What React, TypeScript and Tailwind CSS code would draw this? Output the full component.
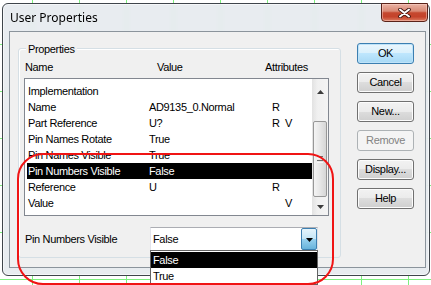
import React from 'react';

type Row = { name: string; value?: string; a1?: string; a2?: string; sel?: boolean };

const rows: Row[] = [
  { name: 'Implementation' },
  { name: 'Name', value: 'AD9135_0.Normal', a1: 'R' },
  { name: 'Part Reference', value: 'U?', a1: 'R', a2: 'V' },
  { name: 'Pin Names Rotate', value: 'True' },
  { name: 'Pin Names Visible', value: 'True' },
  { name: 'Pin Numbers Visible', value: 'False', sel: true },
  { name: 'Reference', value: 'U', a1: 'R' },
  { name: 'Value', a2: 'V' },
];

const gridX = [32, 79, 126, 173, 220, 267, 314, 361, 408];
const gridY = [44, 91, 138, 185, 232, 279];

function Tri({ up = false, color = '#3c3c3c' }: { up?: boolean; color?: string }) {
  return (
    <svg width="7" height="4" viewBox="0 0 7 4">
      <path d={up ? 'M0 4 L3.5 0 L7 4 Z' : 'M0 0 L7 0 L3.5 4 Z'} fill={color} />
    </svg>
  );
}

function Btn({ label, kind = 'normal' }: { label: string; kind?: 'normal' | 'default' | 'disabled' }) {
  const cls =
    kind === 'default'
      ? 'border-[#3c7fb1] bg-[linear-gradient(to_bottom,#eaf6fd_0%,#d9f0fc_50%,#bee6fd_50%,#a7d9f5_100%)] shadow-[inset_0_0_0_1px_#bfe3f9]'
      : kind === 'disabled'
      ? 'border-[#adb2b5] bg-[#f4f4f4] text-[#838383]'
      : 'border-[#707070] bg-[linear-gradient(to_bottom,#f2f2f2_0%,#ebebeb_50%,#dddddd_50%,#cfcfcf_100%)] shadow-[inset_0_0_0_1px_#fcfcfc]';
  return (
    <div className={`w-[57px] h-[21px] rounded-[3px] border flex items-center justify-center ${cls}`}>
      {label}
    </div>
  );
}

export default function App() {
  return (
    <div className="relative w-[431px] h-[285px] overflow-hidden bg-white font-['Liberation_Sans',Arial,sans-serif] text-[11px] leading-[13px] tracking-[-0.35px] text-black">
      <svg className="absolute inset-0" width="431" height="285">
        {gridX.map((x) => (
          <line key={'x' + x} x1={x + 0.5} y1={0} x2={x + 0.5} y2={285} stroke="#7ef07e" />
        ))}
        {gridY.map((y) => (
          <line key={'y' + y} x1={0} y1={y + 0.5} x2={431} y2={y + 0.5} stroke="#7ef07e" />
        ))}
      </svg>

      {/* dialog window */}
      <div className="absolute left-[2px] top-[3px] w-[428px] h-[273px] rounded-[6px] border border-[#3f454b] bg-[rgba(228,233,238,0.86)] backdrop-blur-[3px] shadow-[inset_0_0_0_1px_rgba(255,255,255,0.6)] flex flex-col">
        <div className="h-[27px] flex items-center pl-[7px] font-['Noto_Sans',sans-serif] text-[12px] tracking-normal text-black">
          User Properties
        </div>

        {/* close button */}
        <div className="absolute right-[1px] top-[-1px] w-[47px] h-[19px] rounded-b-[4px] border border-[#5a2219] bg-[linear-gradient(to_bottom,#eab3a4_0%,#d98a76_42%,#c5482f_52%,#c4432b_75%,#dc7c60_100%)] shadow-[inset_0_0_0_1px_rgba(255,220,210,0.45)] flex items-center justify-center">
          <svg width="13" height="10" viewBox="0 0 13 10">
            <path d="M2 1.5 L11 8.5 M11 1.5 L2 8.5" stroke="#3b130d" strokeWidth="3.6" strokeLinecap="round" />
            <path d="M2 1.5 L11 8.5 M11 1.5 L2 8.5" stroke="#ffffff" strokeWidth="2" strokeLinecap="round" />
          </svg>
        </div>

        {/* client area */}
        <div className="relative ml-[6px] w-[417px] h-[237px] border border-[#8b949c] bg-[#f0f0f0] flex items-start">
          {/* group box */}
          <div className="relative ml-[8px] mt-[16px] w-[323px] h-[210px] rounded-[3px] border border-[#d5dfe5] shadow-[inset_1px_1px_0_#ffffff] pl-[5px] flex flex-col">
            <span className="absolute left-[7px] top-[-6px] px-[2px] bg-[#f0f0f0]">Properties</span>

            {/* header */}
            <div className="mt-[12px] h-[13px] flex whitespace-nowrap">
              <div className="w-[133px] pl-[1px]">Name</div>
              <div className="w-[108px]">Value</div>
              <div>Attributes</div>
            </div>

            {/* list */}
            <div className="mt-[4px] w-[305px] h-[138px] border border-[#828790] bg-white flex">
              <div className="w-[287px] pt-[4px]">
                {rows.map((r) => (
                  <div
                    key={r.name}
                    className={`ml-[2px] w-[285px] h-[16px] flex items-center whitespace-nowrap ${r.sel ? 'bg-black text-white' : ''}`}
                  >
                    <div className="w-[122px] pl-[1px]">{r.name}</div>
                    <div className="w-[123px]">{r.value ?? ''}</div>
                    <div className="w-[13px]">{r.a1 ?? ''}</div>
                    <div>{r.a2 ?? ''}</div>
                  </div>
                ))}
              </div>
              {/* scrollbar */}
              <div className="w-[16px] flex flex-col bg-[linear-gradient(to_right,#e2e2e2_0%,#f0f0f0_35%,#f4f4f4_100%)]">
                <div className="h-[23px] flex items-center justify-center pt-[3px]">
                  <Tri up />
                </div>
                <div className="h-[19px]" />
                <div className="h-[76px] mx-[1px] rounded-[2px] border border-[#979797] bg-[linear-gradient(to_right,#f4f4f4_0%,#e8e8e8_45%,#d6d6d6_100%)] flex flex-col items-center justify-center gap-[1px]">
                  <div className="w-[6px] h-[1px] bg-[#6f6f6f]" />
                  <div className="w-[6px] h-[1px] bg-[#f8f8f8]" />
                  <div className="w-[6px] h-[1px] bg-[#6f6f6f]" />
                  <div className="w-[6px] h-[1px] bg-[#f8f8f8]" />
                </div>
                <div className="h-[1px]" />
                <div className="h-[17px] flex items-center justify-center">
                  <Tri />
                </div>
              </div>
            </div>

            {/* combo row */}
            <div className="mt-[11px] h-[24px] flex items-center whitespace-nowrap">
              <div className="w-[126px] pl-[1px]">Pin Numbers Visible</div>
              <div className="relative w-[168px] h-[24px] border border-[#abadb3] border-l-[#e2e3ea] border-r-[#dbdfe6] bg-white flex items-center pl-[2px]">
                False
                <div className="absolute top-0 right-0 bottom-0 w-[16px] rounded-[2px] border border-[#3c7fb1] bg-[linear-gradient(to_bottom,#e5f4fc_0%,#c4e5f6_50%,#98d1ef_50%,#68b3db_100%)] flex items-center justify-center pt-[1px]">
                  <Tri color="#000000" />
                </div>
                {/* drop list */}
                <div className="absolute left-[-1px] top-[22px] w-[168px] border border-[#646464] bg-white pt-[1px] z-10">
                  <div className="h-[16px] flex items-center pl-[2px] bg-black text-white">False</div>
                  <div className="h-[16px] flex items-center pl-[2px]">True</div>
                </div>
              </div>
            </div>
          </div>

          {/* buttons */}
          <div className="ml-[16px] mt-[11px] flex flex-col gap-[8px]">
            <Btn label="OK" kind="default" />
            <Btn label="Cancel" />
            <Btn label="New..." />
            <Btn label="Remove" kind="disabled" />
            <Btn label="Display..." />
            <Btn label="Help" />
          </div>
        </div>
      </div>

      {/* red annotation */}
      <div className="absolute left-[17px] top-[153px] w-[317px] h-[132px] rounded-[26px] border-2 border-[#f01414] pointer-events-none z-20" />
    </div>
  );
}
